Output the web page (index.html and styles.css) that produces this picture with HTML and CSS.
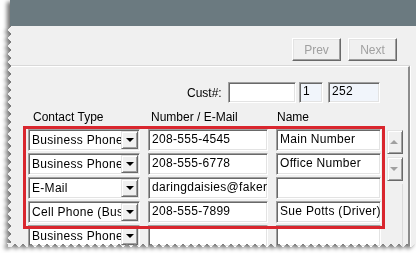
FILE: index.html
```html
<!DOCTYPE html>
<html lang="en">
<head>
  <meta charset="UTF-8" />
  <title>Customer Contacts</title>
  <link rel="stylesheet" href="styles.css">
</head>
<body>
  <div class="shot">
    <div class="titlebar"></div>
    <div class="window">
      <div class="toolbar">
        <button class="btn" disabled>Prev</button>
        <button class="btn" disabled>Next</button>
      </div>
      <div class="group">
        <div class="cust">
          <span class="cust-label">Cust#:</span>
          <span class="field cust-search"></span>
          <span class="field readonly cust-a">1</span>
          <span class="field readonly cust-b">252</span>
        </div>
        <div class="head">
          <span class="h-type">Contact Type</span>
          <span class="h-num">Number / E-Mail</span>
          <span class="h-name">Name</span>
        </div>
        <div class="rows">
          <div class="field select"><span class="val">Business Phone</span><span class="drop"></span></div>
          <span class="field">208-555-4545</span>
          <span class="field">Main Number</span>

          <div class="scroll">
            <span class="sbtn up"></span>
            <span class="sbtn down"></span>
            <span class="track"></span>
          </div>

          <div class="field select"><span class="val">Business Phone</span><span class="drop"></span></div>
          <span class="field">208-555-6778</span>
          <span class="field">Office Number</span>

          <div class="field select"><span class="val">E-Mail</span><span class="drop"></span></div>
          <span class="field">daringdaisies@fakermail.com</span>
          <span class="field"></span>

          <div class="field select"><span class="val">Cell Phone (Business)</span><span class="drop"></span></div>
          <span class="field">208-555-7899</span>
          <span class="field">Sue Potts (Driver)</span>

          <div class="field select"><span class="val">Business Phone</span><span class="drop"></span></div>
          <span class="field"></span>
          <span class="field"></span>

          <!-- annotation box drawn over the first four rows -->
          <div class="highlight"></div>
        </div>
      </div>
    </div>
  </div>
</body>
</html>
```

FILE: styles.css
```css
* {
  box-sizing: border-box;
}
body {
  margin: 0;
  background: #fff;
  width: 416px;
  height: 253px;
  overflow: hidden;
  font-family: 'Liberation Sans', Arial, sans-serif;
  font-size: 12px;
  color: #000;
}

/* torn screenshot with a soft shadow */
.shot {
  filter: drop-shadow(-3px 2px 2px rgba(0, 0, 0, 0.55));
}
.titlebar {
  height: 26px;
  margin-left: 10px;
  width: 406px;
  background: #6b7a80;
}
.window {
  margin-left: 7px;
  width: 409px;
  height: 221px;
  background: #f0f0f0;
  display: flex;
  flex-direction: column;
  -webkit-mask:
    linear-gradient(#000 0 0) 4px 0 / 100% calc(100% - 4px) no-repeat,
    conic-gradient(from 45deg at 0 50%, #000 90deg, #0000 0) 0 0 / 4px 8px repeat-y,
    conic-gradient(from -45deg at 50% 100%, #000 90deg, #0000 0) 0 100% / 8px 4px repeat-x;
  mask:
    linear-gradient(#000 0 0) 4px 0 / 100% calc(100% - 4px) no-repeat,
    conic-gradient(from 45deg at 0 50%, #000 90deg, #0000 0) 0 0 / 4px 8px repeat-y,
    conic-gradient(from -45deg at 50% 100%, #000 90deg, #0000 0) 0 100% / 8px 4px repeat-x;
}

/* Prev / Next */
.toolbar {
  height: 43px;
  display: flex;
  justify-content: flex-end;
  align-items: flex-start;
  gap: 7px;
  padding: 12px 19px 0 0;
}
.btn {
  width: 49px;
  height: 23px;
  padding: 0;
  font: inherit;
  color: #a0a0a0;
  background: #f0f0f0;
  border: 1px solid;
  border-color: #fff #696969 #696969 #fff;
  box-shadow: inset -1px -1px 0 #a0a0a0, inset 1px 1px 0 #e3e3e3;
}

/* group box */
.group {
  flex: 1;
  margin-right: 6px;
  border-top: 1px solid #fff;
  border-right: 2px solid #8c8c8c;
  box-shadow: 0 -1px 0 #d9d9d9, 1px 0 0 #fff;
}
.cust {
  display: flex;
  align-items: center;
  margin-top: 15px;
  padding-left: 180px;
  height: 21px;
}
.cust-label {
  width: 41px;
}
.cust .field {
  height: 21px;
  line-height: 17px;
}
.cust-search {
  width: 68px;
}
.cust-a {
  width: 24px;
  margin-left: 3px;
}
.cust-b {
  width: 52px;
  margin-left: 5px;
}
.field.readonly {
  background: #f1f5fb;
}

.head {
  display: grid;
  grid-template-columns: 112px 120px 105px;
  column-gap: 8px;
  margin: 7px 0 0 21px;
  height: 14px;
  line-height: 14px;
}
.h-type {
  padding-left: 5px;
}
.h-num {
  padding-left: 3px;
}
.h-name {
  padding-left: 1px;
}

/* contact rows */
.rows {
  position: relative;
  display: grid;
  grid-template-columns: 112px 120px 105px 14px;
  grid-auto-rows: 22px;
  column-gap: 8px;
  row-gap: 2px;
  margin: 5px 0 0 21px;
}
.field {
  display: block;
  height: 22px;
  line-height: 18px;
  padding: 0 3px;
  letter-spacing: 0.3px;
  background: #fff;
  white-space: nowrap;
  overflow: hidden;
  border: 1px solid;
  border-color: #a0a0a0 #fff #fff #a0a0a0;
  box-shadow: inset 1px 1px 0 #696969, inset -1px -1px 0 #e3e3e3;
}
.select {
  display: flex;
  padding: 1px 1px 1px 3px;
}
.select .val {
  flex: 1;
  overflow: hidden;
  line-height: 18px;
}
.drop {
  position: relative;
  width: 17px;
  height: 18px;
  background: #f0f0f0;
  border: 1px solid;
  border-color: #e3e3e3 #696969 #696969 #e3e3e3;
  box-shadow: inset 1px 1px 0 #fff, inset -1px -1px 0 #a0a0a0;
}
.drop::after {
  content: '';
  position: absolute;
  left: 4px;
  top: 6px;
  border-left: 4px solid transparent;
  border-right: 4px solid transparent;
  border-top: 4px solid #000;
}

.scroll {
  grid-column: 4;
  grid-row: 1 / span 5;
  margin-left: -2px;
  padding-top: 1px;
  display: flex;
  flex-direction: column;
  gap: 3px;
}
.sbtn {
  position: relative;
  height: 24px;
  background: #f0f0f0;
  border: 1px solid;
  border-color: #e3e3e3 #696969 #696969 #e3e3e3;
  box-shadow: inset 1px 1px 0 #fff, inset -1px -1px 0 #a0a0a0;
}
.sbtn::after {
  content: '';
  position: absolute;
  left: 2px;
  top: 9px;
  border-left: 4px solid transparent;
  border-right: 4px solid transparent;
}
.sbtn.up::after {
  border-bottom: 4px solid #a0a0a0;
}
.sbtn.down::after {
  border-top: 4px solid #a0a0a0;
}
.track {
  flex: 1;
  border-right: 1px solid #dadada;
}

.highlight {
  position: absolute;
  left: -5px;
  top: -3px;
  width: 362px;
  height: 103px;
  border: 3px solid #d9262e;
}
```
